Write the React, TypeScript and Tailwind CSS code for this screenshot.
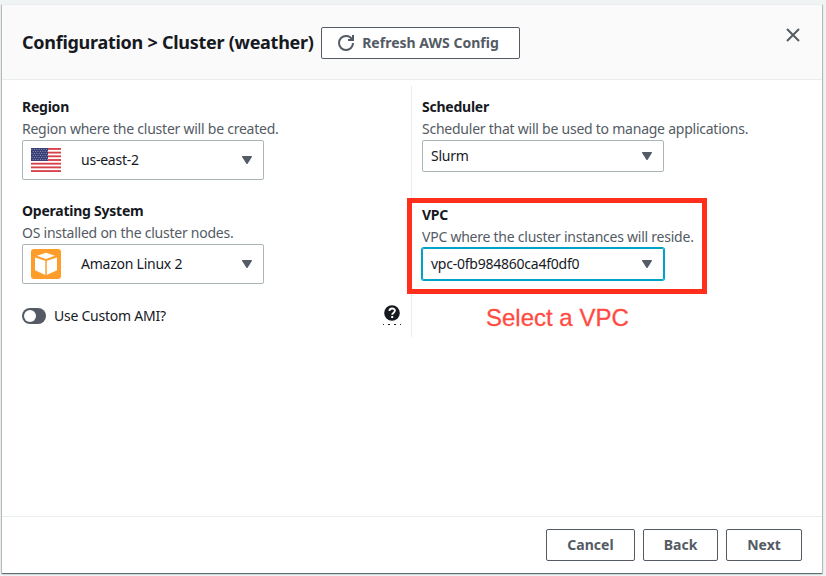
import React from "react";

function Caret() {
  return (
    <svg className="h-[8px] w-[10px] shrink-0" viewBox="0 0 10 8">
      <path d="M0.7 0.7h8.6L5 7.3z" fill="#545b64" stroke="#545b64" strokeWidth="1.4" strokeLinejoin="round" />
    </svg>
  );
}

function FlagUS() {
  const stripes = [0, 1, 2, 3, 4, 5, 6];
  const stars: [number, number][] = [];
  for (let r = 0; r < 6; r++) for (let c = 0; c < 7; c++) stars.push([1.4 + c * 2.4 + (r % 2) * 1.2 - 0.4, 1.3 + r * 2]);
  return (
    <svg className="h-[24px] w-[30px]" viewBox="0 0 30 24">
      <rect width="30" height="24" fill="#fff" />
      {stripes.map((i) => (
        <rect key={i} y={i * 3.69} width="30" height="1.85" fill="#d8414a" />
      ))}
      <rect width="17" height="12.9" fill="#343c74" />
      {stars.map(([x, y], i) => (
        <circle key={i} cx={x} cy={y} r="0.5" fill="#b9bcd6" />
      ))}
    </svg>
  );
}

function AmazonCube() {
  return (
    <svg className="h-[30px] w-[30px]" viewBox="0 0 30 30">
      <rect width="30" height="30" rx="3" fill="#ff9d2a" />
      <g fill="#fff">
        <path d="M15 3.8 24 6.8 15 9.9 5.9 6.8z" />
        <path d="M4 8.4 14.3 11.7V25.9L4 21.2z" />
        <path d="M26 8.4 15.8 11.7V25.9L26 21.2z" />
      </g>
    </svg>
  );
}

type FieldProps = {
  label: string;
  hint: string;
  value: string;
  icon?: React.ReactNode;
  focused?: boolean;
};

function Field({ label, hint, value, icon, focused }: FieldProps) {
  return (
    <div>
      <div className="font-bold">{label}</div>
      <div className="whitespace-nowrap text-[#545b64]">{hint}</div>
      <button
        className={`flex w-[242px] items-center rounded-[2px] border pr-[11px] pl-2 text-left tracking-[-0.24px] ${icon ? "h-10" : "h-8"} ${
          focused ? "border-[#00a1c9] shadow-[0_0_0_1px_#00a1c9]" : "border-[#aab7b8]"
        }`}
      >
        {icon && <span className="mr-5 w-[30px] shrink-0">{icon}</span>}
        <span className="flex-1">{value}</span>
        <Caret />
      </button>
    </div>
  );
}

function Button({ children, className }: { children: React.ReactNode; className: string }) {
  return (
    <button
      className={`flex h-8 items-center justify-center rounded-[2px] border border-[#545b64] bg-white font-bold tracking-[0.02px] text-[#545b64] ${className}`}
    >
      {children}
    </button>
  );
}

export default function App() {
  return (
    <div className="h-[576px] w-[826px] overflow-hidden bg-[#f0f3f3] pt-[4px] pl-[2px] font-['Noto_Sans',sans-serif] text-[14px] leading-[22px] tracking-[-0.24px] text-[#16191f]">
      <div className="flex h-[569px] w-[820px] flex-col bg-white shadow-[0_1px_1px_0_rgba(0,28,36,0.4),1px_1px_1px_0_rgba(0,28,36,0.2),-1px_1px_1px_0_rgba(0,28,36,0.2)]">
        <header className="flex h-[76px] shrink-0 items-start border-t border-b border-[#eaeded] bg-[#fafafa] pr-[21px] pl-5">
          <h1 className="mt-[21px] w-[299px] shrink-0 text-[18px] leading-8 font-bold tracking-[-0.27px] whitespace-nowrap">
            Configuration &gt; Cluster (weather)
          </h1>
          <Button className="mt-[22px] w-[199px] gap-[8px] pr-[4px]">
            <svg className="h-4 w-4" viewBox="0 0 16 16" fill="none" stroke="#545b64" strokeWidth="2">
              <path d="M10 5h5V0" />
              <path d="M15 8a6.957 6.957 0 0 1-7 7 6.957 6.957 0 0 1-7-7 6.957 6.957 0 0 1 7-7 6.870 6.870 0 0 1 6.300 4" />
            </svg>
            <span>Refresh AWS Config</span>
          </Button>
          <button className="mt-[22px] ml-auto" aria-label="Close">
            <svg className="h-4 w-4" viewBox="0 0 16 16" stroke="#545b64" strokeWidth="2">
              <path d="m2 2 12 12M14 2 2 14" />
            </svg>
          </button>
        </header>

        <main className="flex-1 pt-[6px] pl-5">
          <div className="flex h-[251px]">
            <section className="flex w-[390px] flex-col gap-5 border-r border-[#eaeded] pt-[10px] pr-[10px]">
              <Field label="Region" hint="Region where the cluster will be created." value="us-east-2" icon={<FlagUS />} />
              <Field label="Operating System" hint="OS installed on the cluster nodes." value="Amazon Linux 2" icon={<AmazonCube />} />
              <div className="flex items-start">
                <span className="mt-1 flex h-4 w-6 items-center rounded-full bg-[#545b64] pl-[2px]">
                  <span className="h-3 w-3 rounded-full bg-white" />
                </span>
                <span className="mt-px ml-2">Use Custom AMI?</span>
                <span className="ml-auto flex w-[18px] flex-col items-center">
                  <svg className="h-[17px] w-4" viewBox="0 0 16 17">
                    <circle cx="8" cy="9" r="7.8" fill="#16191f" />
                    <path d="M5.4 7.1c0-3.500 5.500-3.300 5.500-.3 0 1.900-2.700 1.900-2.700 4" fill="none" stroke="#fff" strokeWidth="1.8" />
                    <rect x="7.200" y="12" width="2" height="2" fill="#fff" />
                  </svg>
                  <svg className="mt-[3px] h-px w-[18px]" viewBox="0 0 18 1">
                    <path d="M0 .5h1M5 .5h2M11 .5h2M17 .5h1" stroke="#16191f" />
                  </svg>
                </span>
              </div>
            </section>
            <section className="flex flex-col gap-8 pt-[10px] pl-[10px]">
              <Field label="Scheduler" hint="Scheduler that will be used to manage applications." value="Slurm" />
              <div className="relative">
                <Field label="VPC" hint="VPC where the cluster instances will reside." value="vpc-0fb984860ca4f0df0" focused />
                <div className="absolute -top-[6px] -left-[15px] h-[96px] w-[300px] border-[5px] border-[#ff2f1c]" />
                <div className="absolute top-[100px] left-[64px] font-['Liberation_Sans',sans-serif] text-[24px] leading-7 tracking-normal whitespace-nowrap text-[#ff4b42] [-webkit-text-stroke:0.3px_#ff4b42]">
                  Select a VPC
                </div>
              </div>
            </section>
          </div>
        </main>

        <footer className="flex h-[57px] shrink-0 justify-end gap-2 border-t border-[#eaeded] pt-3 pr-5">
          <Button className="w-[89px]">Cancel</Button>
          <Button className="w-[75px]">Back</Button>
          <Button className="w-[76px]">Next</Button>
        </footer>
      </div>
    </div>
  );
}
